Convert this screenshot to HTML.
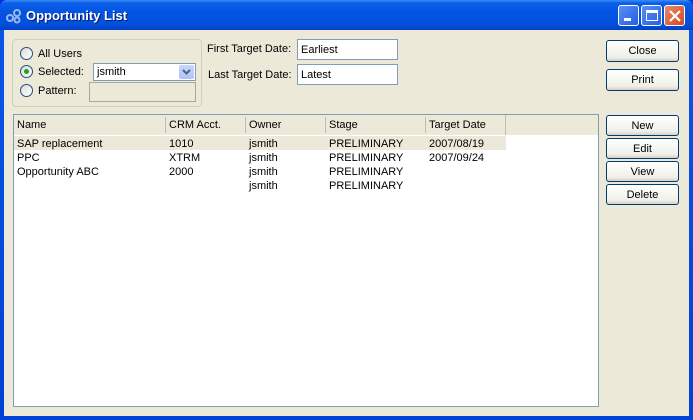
<!DOCTYPE html>
<html><head><style>
*{box-sizing:border-box;margin:0;padding:0}
body{width:693px;height:420px;overflow:hidden;font-family:"Liberation Sans",sans-serif;font-size:11px;color:#000;background:#0831d9}
.win{position:absolute;left:0;top:0;width:693px;height:420px;background:linear-gradient(#0a57e8,#0042d6);border-radius:7px 7px 0 0}
.title{position:absolute;left:0;top:0;width:693px;height:30px;border-radius:7px 7px 0 0;background:linear-gradient(#3d8cf5 0,#0a5fe8 3px,#0454e3 12px,#0250dc 24px,#0140c8 30px)}
.title span{position:absolute;left:26px;top:8px;color:#fff;font-weight:bold;font-size:13px;text-shadow:1px 1px #0a1e6a}
.content{position:absolute;left:4px;top:30px;width:685px;height:386px;background:#ece9d8}
.a{position:absolute}
.t{margin-top:1px}
.tb{position:absolute;top:5px;width:21px;height:21px;border:1px solid #fff;border-radius:3px;background:linear-gradient(135deg,#5a8ef8,#2360e0)}
.btn{position:absolute;left:606px;width:73px;border:1px solid #003c74;border-radius:3px;background:linear-gradient(#fff,#f0f0ea 80%,#d6d0c5);text-align:center;line-height:21px}
.field{position:absolute;background:#fff;border:1px solid #7f9db9;padding-left:3px;line-height:20px}
.radio{position:absolute;left:20px;width:13px;height:13px;border:1px solid #1c5180;border-radius:50%;background:linear-gradient(135deg,#dcdcd4,#fff)}
.hd{position:absolute;top:119px}
.r{position:absolute;margin-top:1px}
</style></head><body>
<div class="win"></div>
<div class="title">
<svg class="a" style="left:6px;top:8px" width="16" height="16"><circle cx="4" cy="10" r="3" fill="none" stroke="#9bb8e8" stroke-width="2"/><circle cx="11" cy="5" r="3" fill="none" stroke="#9bb8e8" stroke-width="2"/><circle cx="11" cy="12" r="2.5" fill="none" stroke="#9bb8e8" stroke-width="2"/></svg>
<span>Opportunity List</span>
<div class="tb" style="left:618px"><div class="a" style="left:5px;top:12px;width:7px;height:3px;background:#fff"></div></div>
<div class="tb" style="left:641px"><div class="a" style="left:4px;top:4px;width:12px;height:11px;border:1px solid #fff;border-top:3px solid #fff"></div></div>
<div class="tb" style="left:664px;background:linear-gradient(135deg,#e9886a,#d14a20)"><svg class="a" style="left:4px;top:4px" width="12" height="12"><path d="M1 1L11 11M11 1L1 11" stroke="#fff" stroke-width="2.2"/></svg></div>
</div>
<div class="content"></div>
<div class="a" style="left:12px;top:39px;width:190px;height:68px;border:1px solid #d0d0bf;border-radius:4px"></div>
<div class="radio" style="top:47px"></div><div class="a" style="left:38px;top:48px">All Users</div>
<div class="radio" style="top:65px"><div class="a" style="left:3px;top:3px;width:5px;height:5px;border-radius:50%;background:#21a121"></div></div><div class="a" style="left:38px;top:66px">Selected:</div>
<div class="radio" style="top:84px"></div><div class="a" style="left:38px;top:85px">Pattern:</div>
<div class="field" style="left:93px;top:63px;width:103px;height:18px;line-height:16px">jsmith
<div class="a" style="right:1px;top:1px;width:15px;height:14px;background:linear-gradient(#c6d6fb,#aec4f6);border-radius:2px"><svg width="15" height="14"><path d="M4 5L7.5 8.5L11 5" fill="none" stroke="#4d6185" stroke-width="2"/></svg></div></div>
<div class="field" style="left:89px;top:82px;width:107px;height:20px;background:#ece9d8;border-color:#aca899"></div>
<div class="a" style="left:207px;top:43px">First Target Date:</div>
<div class="field" style="left:297px;top:39px;width:101px;height:21px">Earliest</div>
<div class="a" style="left:208px;top:69px">Last Target Date:</div>
<div class="field" style="left:297px;top:64px;width:101px;height:21px">Latest</div>
<div class="btn" style="top:40px;height:22px">Close</div>
<div class="btn" style="top:69px;height:22px">Print</div>
<div class="btn" style="top:115px;height:21px;line-height:20px">New</div>
<div class="btn" style="top:138px;height:21px;line-height:20px">Edit</div>
<div class="btn" style="top:161px;height:21px;line-height:20px">View</div>
<div class="btn" style="top:184px;height:21px;line-height:20px">Delete</div>
<div class="a" style="left:13px;top:114px;width:586px;height:293px;background:#fff;border:1px solid #7f9db9"></div>
<div class="a" style="left:14px;top:115px;width:584px;height:20px;background:#ece9d8"></div>
<div class="a" style="left:14px;top:115px;width:492px;height:20px;border-right:1px solid #c0bdb0"></div>
<div class="a" style="left:165px;top:117px;width:1px;height:16px;background:#c0bdb0"></div>
<div class="a" style="left:245px;top:117px;width:1px;height:16px;background:#c0bdb0"></div>
<div class="a" style="left:325px;top:117px;width:1px;height:16px;background:#c0bdb0"></div>
<div class="a" style="left:425px;top:117px;width:1px;height:16px;background:#c0bdb0"></div>
<div class="hd" style="left:17px">Name</div><div class="hd" style="left:169px">CRM Acct.</div><div class="hd" style="left:249px">Owner</div><div class="hd" style="left:329px">Stage</div><div class="hd" style="left:429px">Target Date</div>
<div class="a" style="left:14px;top:136px;width:492px;height:14px;background:#ece9d8"></div>
<div class="r" style="left:17px;top:137px">SAP replacement</div><div class="r" style="left:169px;top:137px">1010</div><div class="r" style="left:249px;top:137px">jsmith</div><div class="r" style="left:329px;top:137px">PRELIMINARY</div><div class="r" style="left:429px;top:137px">2007/08/19</div>
<div class="r" style="left:17px;top:151px">PPC</div><div class="r" style="left:169px;top:151px">XTRM</div><div class="r" style="left:249px;top:151px">jsmith</div><div class="r" style="left:329px;top:151px">PRELIMINARY</div><div class="r" style="left:429px;top:151px">2007/09/24</div>
<div class="r" style="left:17px;top:165px">Opportunity ABC</div><div class="r" style="left:169px;top:165px">2000</div><div class="r" style="left:249px;top:165px">jsmith</div><div class="r" style="left:329px;top:165px">PRELIMINARY</div>
<div class="r" style="left:249px;top:179px">jsmith</div><div class="r" style="left:329px;top:179px">PRELIMINARY</div>
</body></html>
